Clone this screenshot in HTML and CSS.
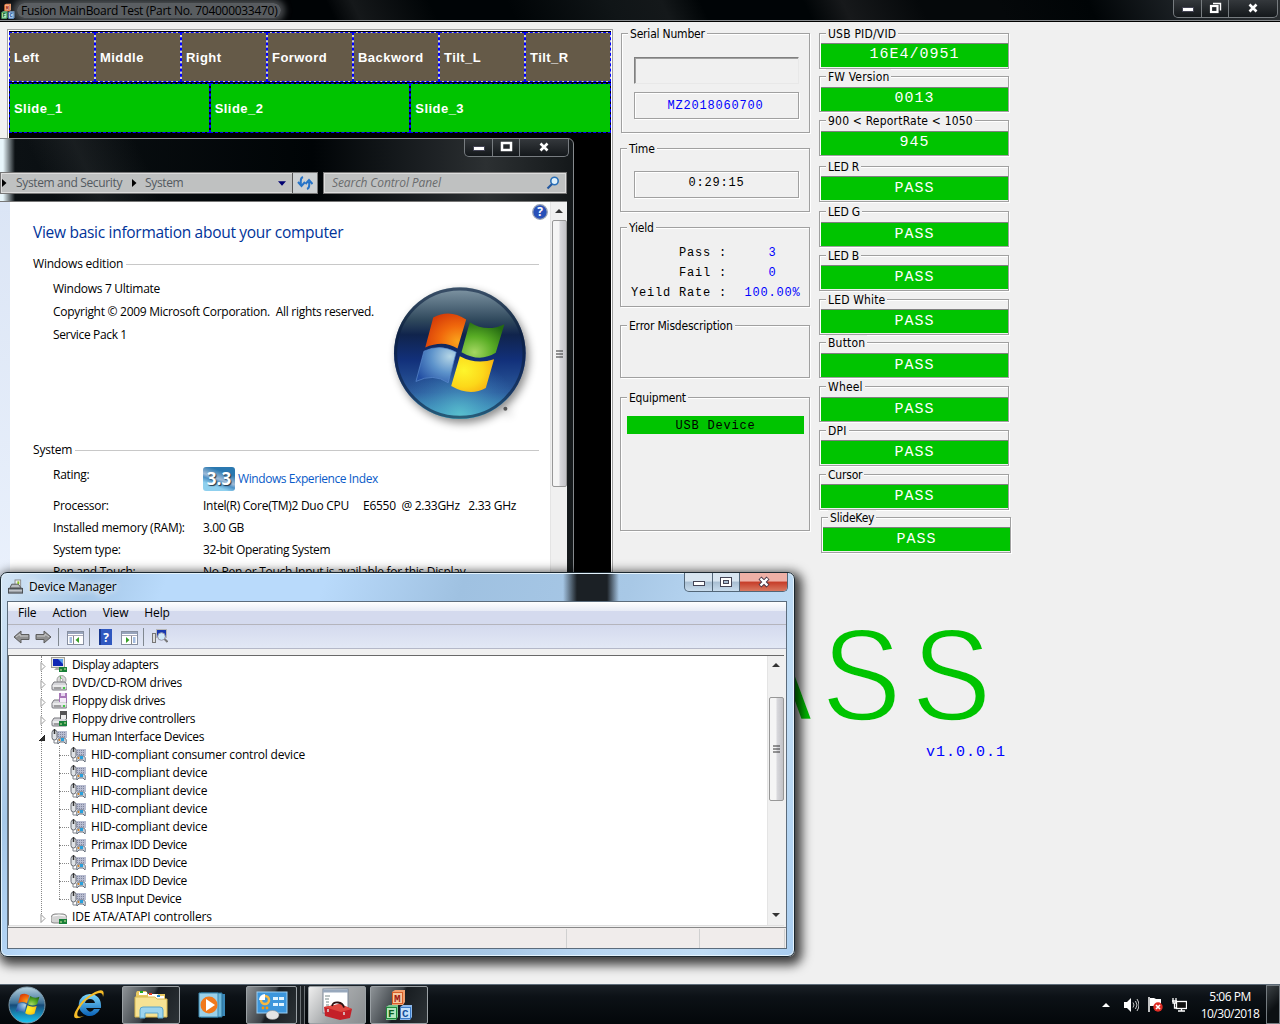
FILE: index.html
```html
<!DOCTYPE html>
<html lang="en">
<head>
<meta charset="utf-8">
<title>Fusion MainBoard Test</title>
<link rel="stylesheet" href="styles.css">
</head>
<body>
<svg class="defs" width="0" height="0">
  <defs>
    <radialGradient id="gRed" cx=".8" cy=".8" r=".9"><stop offset="0" stop-color="#fba51c"/><stop offset=".5" stop-color="#f0680c"/><stop offset="1" stop-color="#d43a08"/></radialGradient>
    <radialGradient id="gGreen" cx=".3" cy=".85" r=".9"><stop offset="0" stop-color="#a5d862"/><stop offset=".5" stop-color="#59ad25"/><stop offset="1" stop-color="#246a12"/></radialGradient>
    <radialGradient id="gBlue" cx=".85" cy=".25" r=".95"><stop offset="0" stop-color="#b5d6e6"/><stop offset=".5" stop-color="#5d93cb"/><stop offset="1" stop-color="#2450a4"/></radialGradient>
    <radialGradient id="gYellow" cx=".3" cy=".4" r=".9"><stop offset="0" stop-color="#fdf52c"/><stop offset=".5" stop-color="#fcd81a"/><stop offset="1" stop-color="#f59a0c"/></radialGradient>
    <linearGradient id="gOrb" x1="0" y1="0" x2="0" y2="1"><stop offset="0" stop-color="#8298a6"/><stop offset=".25" stop-color="#2f485c"/><stop offset=".36" stop-color="#10244c"/><stop offset=".55" stop-color="#12307a"/><stop offset=".8" stop-color="#2c5c9c"/><stop offset="1" stop-color="#48b4c8"/></linearGradient>
    <radialGradient id="gGlow" cx=".5" cy=".98" r=".45"><stop offset="0" stop-color="#5cc4d0" stop-opacity=".9"/><stop offset="1" stop-color="#3a78c0" stop-opacity="0"/></radialGradient>
    <linearGradient id="gStart" x1="0" y1="0" x2="0" y2="1"><stop offset="0" stop-color="#b9d3df"/><stop offset=".45" stop-color="#3a6f96"/><stop offset=".5" stop-color="#174a78"/><stop offset="1" stop-color="#19c8f4"/></linearGradient>
    <linearGradient id="gIe" x1="0" y1="0" x2="0" y2="1"><stop offset="0" stop-color="#7cd8fc"/><stop offset="1" stop-color="#0a62b8"/></linearGradient>
    <symbol id="flag" viewBox="100 125 280 250">
      <path fill="url(#gRed)" d="M160 142Q210 115 259 148L233 235Q190 208 136 232Z"/>
      <path fill="url(#gGreen)" d="M270 156Q320 188 374 162L348 248Q300 278 245 246Z"/>
      <path fill="url(#gBlue)" stroke="#5c8cd0" stroke-width="2" d="M132 243Q180 220 229 246L205 338Q160 308 108 334Z"/>
      <path fill="url(#gYellow)" d="M240 258Q290 285 343 267L318 354Q270 380 214 348Z"/>
    </symbol>
    <symbol id="mfc" viewBox="0 0 28 31">
      <path fill="#f0a070" d="M7 3l3-2h10v12l-2 3H7z"/><path fill="#d85e28" d="M7 3h11v12H7z"/><path fill="#f6c8a0" d="M8 4h9v10H8z"/>
      <path fill="#7cc890" d="M1 18l3-2h9v12l-2 3H1z"/><path fill="#1e8a3c" d="M1 18h11v12H1z"/><path fill="#b8e8c0" d="M2 19h9v10H2z"/>
      <path fill="#8cb8ec" d="M15 18l3-2h9v12l-2 3H15z"/><path fill="#3c7cc8" d="M15 18h11v12H15z"/><path fill="#c4e0fa" d="M16 19h9v10h-9z"/>
      <text class="cube" x="9" y="13" fill="#a01c14">M</text><text class="cube" x="3" y="28" fill="#0c5c20">F</text><text class="cube" x="17" y="28" fill="#14509c">C</text>
    </symbol>
    <symbol id="hid" viewBox="0 0 16 16">
      <rect x="6" y="2" width="10" height="7" fill="#b8bcd0"/><path d="M7 3.500h8M7 5.500h8M7 7.500h8" stroke="#8088a0" stroke-dasharray="1 1"/>
      <rect x="1" y="1" width="5" height="10" rx="2.500" fill="#dfe2e6" stroke="#686c74"/><path d="M3.500 0v5" stroke="#333" stroke-width="1.500"/>
      <path d="M7 15c-1-4 0-6 2-6h4c2 0 3 2 2 6l-2-2H9z" fill="#c8d0d8" stroke="#68707c"/><path d="M10 9h3v3h-3z" fill="#28a0dc"/><circle cx="8.500" cy="11" r="1" fill="#d88020"/><path d="M3 11v3h4" fill="none" stroke="#7c8088"/>
    </symbol>
    <symbol id="drive" viewBox="0 0 16 16"><path d="M1 10l2-3h11l2 3v4q0 1-1 1H2q-1 0-1-1z" fill="#d6d6da" stroke="#77777d"/><path d="M1.500 11h14" stroke="#fff"/><path d="M3 13h7" stroke="#666"/><rect x="12" y="12" width="2" height="2" fill="#4c4"/></symbol>
    <symbol id="display" viewBox="0 0 16 16"><rect x=".5" y=".5" width="13" height="10" fill="#e8e8e0" stroke="#a0a098"/><rect x="2" y="2" width="10" height="7" fill="#1028b4"/><path d="M7 2h5v5z" fill="#58a0f0"/><path d="M5 11h4v2H3z" fill="#b0b0a8"/><rect x="8" y="10" width="8" height="5" fill="#188038"/><path d="M9 13h2M13 12h2" stroke="#d8e8a0"/></symbol>
    <symbol id="disc" viewBox="0 0 16 16"><circle cx="10.500" cy="5" r="4.500" fill="#dcdcdc" stroke="#a0a0a0"/><circle cx="10.500" cy="5" r="1.400" fill="#fff" stroke="#aaa"/><path d="M9 1l1 3" stroke="#4ab84a"/><use href="#drive"/></symbol>
    <symbol id="floppy" viewBox="0 0 16 16"><use href="#drive"/><rect x="8" y="0" width="8" height="9" fill="#a878b8"/><rect x="10" y="0" width="4" height="3" fill="#e8d8f0"/><rect x="9" y="5" width="6" height="4" fill="#f4ecf8"/></symbol>
    <symbol id="floppyc" viewBox="0 0 16 16"><use href="#drive"/><rect x="9" y="0" width="7" height="8" fill="#555"/><rect x="10" y="4" width="5" height="4" fill="#eee"/><rect x="8" y="10" width="8" height="5" fill="#188038"/><path d="M9 13h2M13 12h2" stroke="#d8e8a0"/></symbol>
    <symbol id="ide" viewBox="0 0 16 16"><path d="M0 8q1-3 4-3h8q3 0 4 3v4q-1 2-4 2H3q-3 0-3-2z" fill="#d4d4d4" stroke="#888"/><path d="M2 7q6-2 12 0" stroke="#fff" fill="none"/><rect x="8" y="10" width="8" height="5" fill="#188038"/><path d="M9 13h2M13 12h2" stroke="#d8e8a0"/></symbol>
    <symbol id="arrow" viewBox="0 0 17 14"><path d="M1 7l7-6v3.500h8v5H8V13z" fill="#909090" stroke="#5c5c5c"/><path d="M3 7l4-3v2h8" fill="none" stroke="#c8c8c8"/></symbol>
    <symbol id="pane" viewBox="0 0 17 14"><rect x=".5" y=".5" width="16" height="13" fill="#fff" stroke="#8890a0"/><path d="M1 2h15" stroke="#98a4bc" stroke-width="2"/><path d="M1 4.500h15" stroke="#aab"/><path d="M6.500 5v8" stroke="#888"/><path d="M2.500 7h2.500M2.500 9h2.500M2.500 11h2.500" stroke="#4878c0"/><path d="M12 6v6L8.500 9z" fill="#38a028"/></symbol>
  </defs>
</svg>

<section class="app">
  <header class="app-title">
    <svg class="mfc-small"><use href="#mfc"/></svg>
    <span class="app-name">Fusion MainBoard Test (Part No. 704000033470)</span>
    <div class="caption dark">
      <i><svg viewBox="0 0 14 12"><rect x="1.500" y="5.500" width="11" height="4" fill="#fff" stroke="#445"/></svg></i>
      <i><svg viewBox="0 0 14 12"><path d="M5 1.500h7.500v7" fill="none" stroke="#fff" stroke-width="1.400"/><rect x="3" y="4" width="6.500" height="6" fill="none" stroke="#fff" stroke-width="2.200"/></svg></i>
      <i class="x"><svg viewBox="0 0 14 12"><path d="M3.500 2.500l7 7M10.500 2.500l-7 7" stroke="#fff" stroke-width="2.600"/></svg></i>
    </div>
  </header>
  <main class="app-body">
    <div class="keys">
      <div class="row top"><b>Left</b><b>Middle</b><b>Right</b><b>Forword</b><b>Backword</b><b>Tilt_L</b><b>Tilt_R</b></div>
      <div class="row slides"><b>Slide_1</b><b>Slide_2</b><b>Slide_3</b></div>
    </div>
    <div class="panel">
      <div class="columns">
        <div class="info">
          <fieldset class="serial"><legend>Serial Number</legend><div class="input"></div><div class="field blue">MZ2018060700</div></fieldset>
          <fieldset class="time"><legend>Time</legend><div class="field">0:29:15</div></fieldset>
          <fieldset class="yield"><legend>Yield</legend>
            <dl><dt>Pass :</dt><dd>3</dd><dt>Fail :</dt><dd>0</dd><dt>Yeild Rate :</dt><dd>100.00%</dd></dl></fieldset>
          <fieldset class="error"><legend>Error Misdescription</legend></fieldset>
          <fieldset class="equip"><legend>Equipment</legend><div class="usb">USB Device</div></fieldset>
        </div>
        <div class="tests">
          <fieldset class="value"><legend class="wide">USB PID/VID</legend><div>16E4/0951</div></fieldset>
          <fieldset class="value low"><legend class="mid">FW Version</legend><div>0013</div></fieldset>
          <fieldset class="value low"><legend class="wide">900 &lt; ReportRate &lt; 1050</legend><div>945</div></fieldset>
          <fieldset><legend>LED R</legend><div>PASS</div></fieldset>
          <fieldset class="low"><legend>LED G</legend><div>PASS</div></fieldset>
          <fieldset><legend>LED B</legend><div>PASS</div></fieldset>
          <fieldset><legend class="mid">LED White</legend><div>PASS</div></fieldset>
          <fieldset class="low"><legend class="wide">Button</legend><div>PASS</div></fieldset>
          <fieldset class="low"><legend class="wide">Wheel</legend><div>PASS</div></fieldset>
          <fieldset><legend class="wide">DPI</legend><div>PASS</div></fieldset>
          <fieldset><legend>Cursor</legend><div>PASS</div></fieldset>
          <fieldset class="shift"><legend>SlideKey</legend><div>PASS</div></fieldset>
        </div>
      </div>
      <div class="result">PASS</div>
      <div class="version">v1.0.0.1</div>
    </div>
  </main>
</section>

<section class="sys">
  <div class="sys-cap"><div class="caption dark">
    <i><svg viewBox="0 0 14 12"><rect x="1.500" y="5.500" width="11" height="4" fill="#fff" stroke="#445"/></svg></i>
    <i><svg viewBox="0 0 14 12"><rect x="3" y="2" width="9" height="7" fill="none" stroke="#fff" stroke-width="2.500"/></svg></i>
    <i class="x"><svg viewBox="0 0 14 12"><path d="M3.500 2.500l7 7M10.500 2.500l-7 7" stroke="#fff" stroke-width="2.600"/></svg></i>
  </div></div>
  <div class="nav">
    <div class="address">
      <svg class="tri" viewBox="0 0 5 8"><path d="M0 0l4.500 4L0 8z"/></svg><span class="crumb1">System and Security</span>
      <svg class="tri" viewBox="0 0 5 8"><path d="M0 0l4.500 4L0 8z"/></svg><span class="crumb2">System</span>
      <svg class="drop" viewBox="0 0 9 5"><path fill="#000070" d="M0 0h9L4.500 5z"/></svg>
      <span class="refresh"><svg viewBox="0 0 16 14"><path d="M6 1Q3 2 4 8M1 6l3.500 4L8 6M10 13q3-1 2-7M8.500 8L12 4l3.500 4" fill="none" stroke="#2674c8" stroke-width="2"/></svg></span>
    </div>
    <div class="search"><em>Search Control Panel</em><svg viewBox="0 0 14 14"><circle cx="8.500" cy="5" r="3.700" fill="#dff0fa" stroke="#2a70b8" stroke-width="1.600"/><path d="M6 8l-4.500 4.500" stroke="#2458a0" stroke-width="2.200"/></svg></div>
  </div>
  <div class="sys-client">
    <div class="side"></div>
    <div class="page">
      <div class="headrow"><h1>View basic information about your computer</h1>
        <svg class="help" viewBox="0 0 16 16"><circle cx="8" cy="8" r="7.300" fill="#2850b8" stroke="#9aa4b4" stroke-width="1.300"/><text x="8" y="12.300" text-anchor="middle" class="q">?</text></svg></div>
      <div class="sect"><span>Windows edition</span></div>
      <div class="edition">
        <div class="lines"><p class="l1">Windows 7 Ultimate</p><p class="l2">Copyright © 2009 Microsoft Corporation.&nbsp; All rights reserved.</p><p class="l3">Service Pack 1</p></div>
        <svg class="logo" viewBox="39 47 406 406">
          <circle cx="240" cy="249" r="198" fill="url(#gOrb)"/><circle cx="240" cy="249" r="198" fill="url(#gGlow)"/><circle cx="240" cy="249" r="193" fill="none" stroke="#0b2040" stroke-width="9" stroke-opacity=".6"/>
          <use href="#flag" x="100" y="125" width="280" height="250"/><circle cx="377" cy="416" r="6" fill="#555"/>
        </svg>
      </div>
      <div class="sect second"><span>System</span></div>
      <div class="specs">
        <span class="rating">Rating:</span><span class="index"><i class="score">3.3</i><a>Windows Experience Index</a></span>
        <span class="k1">Processor:</span><span class="cpu">Intel(R) Core(TM)2 Duo CPU&nbsp;&nbsp;&nbsp;&nbsp; E6550&nbsp; @ 2.33GHz&nbsp;&nbsp; 2.33 GHz</span>
        <span class="k2">Installed memory (RAM):</span><span class="v3">3.00 GB</span>
        <span class="k3">System type:</span><span class="v3">32-bit Operating System</span>
        <span class="k4">Pen and Touch:</span><span class="v4">No Pen or Touch Input is available for this Display</span>
      </div>
    </div>
    <div class="scroll"><svg class="up" viewBox="0 0 8 4"><path d="M0 4l4-4 4 4z"/></svg><div class="thumb"><svg viewBox="0 0 7 8"><path d="M0 1h7M0 4h7M0 7h7" stroke="#333"/></svg></div></div>
  </div>
</section>

<section class="dm">
  <div class="dm-title">
    <svg viewBox="0 0 16 16"><rect x="7.500" y=".5" width="6" height="8" fill="#eee" stroke="#888"/><rect x="10" y="2" width="2" height="3" fill="#8ac820"/><path d="M2 9l2-4h7l3 4z" fill="#b8bcc0" stroke="#555"/><rect x=".5" y="9.500" width="15" height="5" fill="#8c9298" stroke="#44484c"/><path d="M1 12h14" stroke="#d8dce0"/></svg>
    <span class="dm-name">Device Manager</span>
    <div class="caption light">
      <i><svg viewBox="0 0 14 12"><rect x="1.500" y="5.500" width="11" height="4" fill="#fff" stroke="#445"/></svg></i>
      <i><svg viewBox="0 0 14 12"><rect x="1.500" y="1.500" width="11" height="9" fill="#fff" stroke="#445"/><rect x="4.500" y="4.500" width="5" height="3" fill="#a8bcd0" stroke="#445"/></svg></i>
      <i class="x"><svg viewBox="0 0 14 12"><path d="M3 2l8 8M11 2l-8 8" stroke="#434" stroke-width="4.200"/><path d="M3.500 2.500l7 7M10.500 2.500l-7 7" stroke="#fff" stroke-width="2.400"/></svg></i>
    </div>
  </div>
  <div class="dm-client">
    <nav class="menu"><span>File</span><span>Action</span><span>View</span><span>Help</span></nav>
    <div class="tools">
      <svg class="a1"><use href="#arrow"/></svg><svg class="a2"><use href="#arrow"/></svg><u></u>
      <svg class="p1"><use href="#pane"/></svg><u></u>
      <svg class="h1" viewBox="0 0 13 16"><rect width="13" height="16" fill="#3058c0"/><path d="M1 0v16" stroke="#183890" stroke-width="2"/><text x="7" y="12.500" text-anchor="middle" class="q">?</text></svg>
      <svg class="p2"><use href="#pane"/></svg><u></u>
      <svg class="s1" viewBox="0 0 16 15"><rect x="4.500" y=".5" width="10" height="8" fill="#1838b0" stroke="#b8b8b8"/><rect x=".5" y="4.500" width="3" height="9" fill="#ddd" stroke="#777"/><circle cx="9.500" cy="7.500" r="3.800" fill="#cfe8f8" stroke="#99a"/><path d="M12.500 10l3 3" stroke="#777" stroke-width="2"/></svg>
    </div>
    <div class="treebox">
      <div class="tree">
        <div class="n"><svg class="exp" viewBox="0 0 5 9"><path d="M.5 .5v8L4.500 4.500z"/></svg><svg class="ic"><use href="#display"/></svg><span class="t1">Display adapters</span></div>
        <div class="n"><svg class="exp" viewBox="0 0 5 9"><path d="M.5 .5v8L4.500 4.500z"/></svg><svg class="ic"><use href="#disc"/></svg><span>DVD/CD-ROM drives</span></div>
        <div class="n"><svg class="exp" viewBox="0 0 5 9"><path d="M.5 .5v8L4.500 4.500z"/></svg><svg class="ic"><use href="#floppy"/></svg><span class="t3">Floppy disk drives</span></div>
        <div class="n"><svg class="exp" viewBox="0 0 5 9"><path d="M.5 .5v8L4.500 4.500z"/></svg><svg class="ic"><use href="#floppyc"/></svg><span class="t3">Floppy drive controllers</span></div>
        <div class="n"><svg class="exp open" viewBox="0 0 6 6"><path d="M6 0v6H0z"/></svg><svg class="ic"><use href="#hid"/></svg><span class="t3">Human Interface Devices</span></div>
        <div class="kids">
          <div class="n"><svg class="ic"><use href="#hid"/></svg><span>HID-compliant consumer control device</span></div>
          <div class="n"><svg class="ic"><use href="#hid"/></svg><span class="t7">HID-compliant device</span></div>
          <div class="n"><svg class="ic"><use href="#hid"/></svg><span class="t7">HID-compliant device</span></div>
          <div class="n"><svg class="ic"><use href="#hid"/></svg><span class="t7">HID-compliant device</span></div>
          <div class="n"><svg class="ic"><use href="#hid"/></svg><span class="t7">HID-compliant device</span></div>
          <div class="n"><svg class="ic"><use href="#hid"/></svg><span class="t1">Primax IDD Device</span></div>
          <div class="n"><svg class="ic"><use href="#hid"/></svg><span class="t1">Primax IDD Device</span></div>
          <div class="n"><svg class="ic"><use href="#hid"/></svg><span class="t1">Primax IDD Device</span></div>
          <div class="n"><svg class="ic"><use href="#hid"/></svg><span class="t3">USB Input Device</span></div>
        </div>
        <div class="n"><svg class="exp" viewBox="0 0 5 9"><path d="M.5 .5v8L4.500 4.500z"/></svg><svg class="ic"><use href="#ide"/></svg><span class="t7">IDE ATA/ATAPI controllers</span></div>
      </div>
      <div class="scroll dms"><svg class="up" viewBox="0 0 8 4"><path d="M0 4l4-4 4 4z"/></svg><div class="thumb"><svg viewBox="0 0 7 8"><path d="M0 1h7M0 4h7M0 7h7" stroke="#333"/></svg></div><svg class="down" viewBox="0 0 8 4"><path d="M0 0l4 4 4-4z"/></svg></div>
    </div>
    <div class="status"><i></i><i></i><i></i></div>
  </div>
</section>

<footer class="taskbar">
  <svg class="start" viewBox="0 0 38 38"><circle cx="19" cy="19" r="18" fill="url(#gStart)" stroke="#7d98a8"/><use href="#flag" x="7" y="7" width="25" height="23"/></svg>
  <svg class="ie" viewBox="0 0 34 34"><path d="M18 6a11 11 0 1 0 10 15h-6q-4 6-8-1h15Q30 7 18 6zM13 15q1-4 5-4t5 4z" fill="url(#gIe)"/><path d="M31 9Q34-1 23 4Q9 11 3 24Q-1 34 12 28Q3 31 6 23Q12 11 24 6Q31 3 31 9" fill="#f6bc28"/></svg>
  <span class="tb explorer"><svg viewBox="0 0 34 30"><path d="M2 3l1-2h9l2 3h17v22H2z" fill="#e8c860"/><path d="M5 2h8v3H5zM14 4h10v4H14zM22 6h8v3h-8z" fill="#fff"/><path d="M6 1h3v2H6z" fill="#2a2"/><path d="M15 3h3v2h-3z" fill="#e83820"/><path d="M23 5h3v2h-3z" fill="#28c"/><path d="M1 7h20l2 2h10v18H1z" fill="#f6e294" stroke="#d8b850"/><path d="M6 28v-8q0-3 3-3h17q3 0 3 3v8h-5v-5H11v5z" fill="#9cd4ee" stroke="#58a4cc"/></svg></span>
  <svg class="wmp" viewBox="0 0 28 26"><path d="M5 2h22v22H5z" fill="#3a88b8"/><path d="M3 1h21v24H3z" fill="#6cb8dc" stroke="#2a7098"/><path d="M1 1h19v24H1z" fill="#9cd0e8" stroke="#3a88b0"/><circle cx="11" cy="13" r="8.500" fill="#f0791c"/><path d="M8 7l9 6-9 6z" fill="#fff"/></svg>
  <span class="tb cpanel"><svg viewBox="0 0 34 30"><rect x="2" y="2" width="30" height="21" fill="#3c96dc" stroke="#9cd0f4"/><circle cx="10" cy="10" r="4" fill="none" stroke="#f8b840" stroke-width="2.500"/><path d="M10 10V4a6 6 0 0 0-6 6z" fill="#fff"/><rect x="18" y="7" width="5" height="3" fill="#e0f4ff"/><rect x="24" y="7" width="5" height="3" fill="#e0f4ff"/><rect x="18" y="13" width="5" height="3" fill="#e0f4ff"/><rect x="24" y="13" width="5" height="3" fill="#e0f4ff"/><circle cx="8" cy="18" r="1.400" fill="#f90"/><circle cx="12" cy="18" r="1.400" fill="#f90"/><ellipse cx="17.500" cy="25" rx="6.500" ry="4.500" fill="#e4e4e4" stroke="#888" stroke-width=".5"/></svg></span><span class="edge"></span><span class="edge"></span>
  <span class="tb active"><svg viewBox="0 0 34 34"><rect x="3" y="1" width="25" height="24" fill="#fff" stroke="#788494"/><path d="M3 3h25" stroke="#98a8bc" stroke-width="3"/><path d="M5 8h5M5 11h4M6 14h3M6 17h3" stroke="#788"/><path d="M4 19l16-3 12 5-2 9-10 2L5 28z" fill="#c42028"/><path d="M4 19l16-3 12 5-11 3z" fill="#e04840"/><path d="M12 18q1-4 6-3.500t6 5" fill="none" stroke="#301010" stroke-width="1.800"/><path d="M8 21v3M24 24v3" stroke="#ddd" stroke-width="1.500"/></svg></span>
  <span class="tb mfcb"><svg viewBox="0 0 28 31"><use href="#mfc" width="28" height="31"/></svg></span>
  <div class="tray">
    <svg class="tu" viewBox="0 0 8 4"><path d="M0 4l4-4 4 4z" fill="#fff"/></svg>
    <svg class="vol" viewBox="0 0 15 14"><path d="M0 4h3l4-4v14L3 10H0z" fill="#fff"/><path d="M9 4.500q2 2.500 0 5M11.500 3q3 4 0 8M13 1q4 6 0 12" fill="none" stroke="#ccc"/></svg>
    <svg class="flg" viewBox="0 0 15 15"><path d="M1 0v15" stroke="#fff" stroke-width="1.500"/><path d="M2 1h4l2 1h5v8H8L6 9H2z" fill="#fff"/><circle cx="10" cy="10" r="4.700" fill="#e02c24"/><path d="M8 8l4 4M12 8l-4 4" stroke="#fff" stroke-width="1.600"/></svg>
    <svg class="net" viewBox="0 0 15 14"><rect x="4.500" y="3.500" width="10" height="7" fill="#111" stroke="#fff" stroke-width="1.300"/><path d="M6 13h7M9.500 11v2M0 3h5M1 0v5h3V0M2.500 5v5H5" fill="none" stroke="#fff" stroke-width="1.300"/></svg>
    <div class="clock"><span>5:06 PM</span><span>10/30/2018</span></div>
    <div class="peek"></div>
  </div>
</footer>
</body>
</html>
```
FILE: styles.css
```css
* { box-sizing: border-box; }
body { margin: 0; width: 1280px; height: 1024px; overflow: hidden; position: relative; background: #f0f0f0; color: #000; font: 12px/16px "Open Sans", "Noto Sans", sans-serif; letter-spacing: -0.2px; }
svg { display: block; flex: none; }
span, p, a, legend, em { white-space: nowrap; }
.defs { position: absolute; }
.cube { font: bold 11px "Liberation Mono", monospace; letter-spacing: 0; }
.q { font: bold 12px "Open Sans", sans-serif; fill: #fff; letter-spacing: 0; }

/* test application */
.app { height: 984px; display: flex; flex-direction: column; }
.app-title { height: 22px; flex: none; display: flex; align-items: flex-start; background: linear-gradient(65deg, #0d1114 0 8%, #000305 20% 26%, #15181a 28%, #000406 34% 40%, #101517 48%, #14181a 52%, #000406 55% 63%, #17191b 66%, #05080a 72% 78%, #000406 85%, #1c2125 92%, #2c3033); border-bottom: 1px solid #000; box-shadow: inset 0 -1px #8a8d90; overflow: hidden; padding-left: 1px; }
.mfc-small { width: 14px; height: 16px; margin-top: 3px; }
.app-name { margin: 3px 0 0 2px; padding: 0 4px; height: 15px; line-height: 15px; border-radius: 8px; background: rgba(118,122,125,.75); box-shadow: 0 0 6px 4px rgba(118,122,125,.6); letter-spacing: -.29px; }
.caption { display: flex; margin-left: auto; height: 19px; border: 1px solid #777c80; border-top: 0; border-radius: 0 0 5px 5px; }
.caption i { width: 27px; display: flex; align-items: center; justify-content: center; border-right: 1px solid #777c80; }
.caption i:first-child { width: 28px; }
.caption i.x { flex: 1; border: 0; }
.caption svg { width: 14px; height: 12px; }
.dark { width: 105px; background: linear-gradient(#34383c, #14181b); }
.app-title .dark { margin-right: 2px; height: 18px; width: 105px; }
.app-title .dark svg { margin-top: -2px; }
.app-body { flex: 1; display: flex; align-items: flex-start; padding: 4px 0 0 7px; }
.keys { width: 606px; height: 900px; margin-top: 3px; background: #000; border: 1px solid #a0a0a0; border-width: 1px 1px 0; box-shadow: inset 1px 1px #fff, inset -1px 0 #fff; padding: 2px 1px 0; display: flex; flex-direction: column; }
.row { display: flex; }
.row b { flex: 1; border: 1px solid; display: flex; align-items: center; padding-left: 4px; color: #fff; font: bold 13px "Liberation Sans", sans-serif; letter-spacing: .45px; outline: 1px dashed #00f; outline-offset: -1px; }
.top { height: 50px; margin-bottom: 1px; }
.slides { height: 50px; }
.top b { background: #655a48; border-color: #d0d0d0; }
.slides b { background: #00c400; border-color: #000; }
.panel { width: 400px; margin-left: 7px; }
.columns { display: flex; gap: 9px; }
fieldset { margin: 0; padding: 0; min-width: 0; border: 1px solid #a0a0a0; box-shadow: 1px 1px #fff, inset 1px 1px #fff; }
legend { margin-left: 6px; padding: 0 2px; height: 14px; background: #f0f0f0; font: 12px/16px "DejaVu Sans Condensed", "DejaVu Sans", sans-serif; letter-spacing: -.2px; }
legend.wide { letter-spacing: .2px; }
legend.mid { letter-spacing: .15px; }
.info { width: 190px; display: grid; grid-template-rows: 115px 79px 98px 72px 141px; font: 12px/14px "Liberation Mono", monospace; letter-spacing: .8px; }
.serial { height: 107px; margin-left: 1px; }
.time { height: 71px; }
.yield { height: 87px; }
.error { height: 60px; }
.equip { height: 141px; }
.input { height: 27px; margin: 17px 10px 8px 12px; border: 1px solid; border-color: #808080 #e8e8e8 #e8e8e8 #808080; box-shadow: inset 1px 1px #a0a0a0; }
.field { height: 27px; margin: 0 10px 0 12px; border: 1px solid #a0a0a0; box-shadow: inset 1px 1px #fff, 1px 1px #fff; text-align: center; line-height: 25px; }
.serial .field { line-height: 26px; padding-right: 2px; }
.time .field { margin: 16px 10px 0 13px; line-height: 23px; }
.blue { color: #00f; }
dl { margin: 12px 9px 0 0; display: grid; grid-template-columns: 106px 73px; grid-template-rows: 20px 20px 20px; }
dt { text-align: right; }
dd { margin: 0 0 0 17px; width: 57px; color: #00f; text-align: center; white-space: nowrap; }
.usb { margin: 12px 5px 0 6px; height: 18px; line-height: 20px; background: #00c400; text-align: center; }
.tests { width: 192px; display: grid; grid-template-rows: 43px 44px 46px 45px 44px 44px 43px 44px 44px 44px 43px 42px; }
.tests fieldset { width: 190px; height: 43px; }
.tests fieldset.shift { margin-left: 2px; }
.tests div { margin: 3px 0 0 1px; height: 24px; border-top: 1px solid #808080; background: #00c400; color: #fff; text-align: center; font: 15px/23px "Liberation Mono", monospace; letter-spacing: 1px; }
.tests .value div { line-height: 21px; }
.tests .low div { margin-top: 4px; }
.result { margin: 73px 0 0 21px; height: 120px; font: 137px/120px "Liberation Mono", monospace; letter-spacing: 7.800px; color: #00c400; -webkit-text-stroke: 3.500px #f0f0f0; }
.version { width: 386px; margin-top: -2px; text-align: right; color: #00f; font: 15px/20px "Liberation Mono", monospace; letter-spacing: 1px; }

/* system properties window */
.sys { position: absolute; left: -6px; top: 138px; width: 580px; height: 440px; overflow: hidden; border: 1px solid #868a8d; border-radius: 0 6px 0 0; background: linear-gradient(65deg, transparent 30%, rgba(60,64,66,.3) 36%, transparent 44%), linear-gradient(90deg, #e8f6fb 0 8px, #0c1114 20px, #000406 55%, #1c2023 75%, #2c3032 85%, #14181a); display: flex; flex-direction: column; padding: 0 6px 0 5px; }
.sys-cap { height: 33px; display: flex; }
.sys-cap .dark { margin-right: -2px; height: 18px; }
.sys-cap .dark svg { margin-top: -1px; }
.nav { height: 22px; display: flex; gap: 6px; color: #535960; }
.address { width: 318px; border: 1px solid #777; box-shadow: inset 0 0 0 1px #ddd; background: #bfc1c1; display: flex; align-items: center; padding-left: 1px; margin-right: -1px; }
.tri { width: 5px; height: 8px; }
.crumb1 { margin: 0 9px 0 9px; width: 107px; letter-spacing: -.35px; }
.crumb2 { margin-left: 8px; flex: 1; letter-spacing: -.35px; }
.drop { width: 8px; height: 5px; margin-right: 6px; }
.refresh { width: 25px; height: 20px; border-left: 1px solid #555; display: flex; align-items: center; justify-content: center; background: #ccd0d2; }
.refresh svg { width: 16px; height: 14px; }
.search { flex: 1; border: 1px solid #777; box-shadow: inset 0 0 0 1px #ddd; background: #bfc1c1; display: flex; align-items: center; justify-content: space-between; padding: 0 6px 0 8px; color: #6a6c6e; letter-spacing: -.1px; }
.search svg { width: 14px; height: 14px; }
.sys-client { margin-top: 7px; height: 400px; flex: none; border-top: 1px solid #777; display: flex; background: #fff; margin-bottom: -50px; }
.side { width: 10px; background: linear-gradient(#dbe5f5, #eaf1fc); }
.page { flex: 1; padding: 0 11px 0 23px; }
.headrow { display: flex; justify-content: space-between; }
h1 { margin: 19px 0 1px; font: 15.500px/22px "Open Sans", sans-serif; color: #003399; letter-spacing: -.29px; white-space: nowrap; }
.help { width: 16px; height: 16px; margin: 2px -9px 0 0; }
.sect { display: flex; align-items: center; gap: 3px; margin-top: 12px; height: 16px; }
.sect::after { content: ""; flex: 1; height: 1px; background: #c8c8c8; }
.edition { display: flex; justify-content: space-between; padding: 9px 11px 0 20px; height: 164px; }
.edition p { margin: 0 0 7px; letter-spacing: -.28px; }
.edition .l3 { letter-spacing: -.35px; }
.logo { width: 135px; height: 135px; margin: 5px 0 0 -40px; filter: drop-shadow(3px 4px 4px rgba(0,0,0,.45)); }
.sect.second { margin-top: 6px; }
.specs { padding: 9px 0 0 20px; display: grid; grid-template-columns: 150px 1fr; grid-template-rows: 31px 22px 22px 22px 22px; letter-spacing: -.28px; }
.k2 { letter-spacing: -.22px; }
.v3 { letter-spacing: -.34px; }
.index { display: flex; gap: 3px; align-items: center; height: 24px; color: #0a5bc8; letter-spacing: -.42px; }
.score { width: 32px; height: 24px; border-radius: 3px; background: linear-gradient(20deg, #8fd0ee 25%, #4e92c6 40%, #a0bcd8 50%, #2a78b0 75%); color: #fff; font: bold 17px/24px "Open Sans", sans-serif; text-align: center; text-shadow: 1px 1px 1px #234; letter-spacing: 0; }
.scroll { width: 17px; background: #f0f0f0; display: flex; flex-direction: column; align-items: center; border-left: 1px solid #e4e4e4; }
.up, .down { width: 8px; height: 4px; fill: #333; }
.up { margin-top: 7px; }
.down { margin: auto 0 8px; }
.thumb { margin-top: 7px; width: 15px; height: 267px; border: 1px solid #979797; border-radius: 2px; background: linear-gradient(90deg, #f5f5f5 45%, #d8d8dc 55%, #c2c2c6); display: flex; align-items: center; justify-content: center; flex: none; }
.thumb svg { width: 7px; height: 8px; }

/* device manager */
.dm { position: absolute; left: 0; top: 572px; width: 795px; height: 385px; border: 1px solid #1c2830; border-radius: 7px; background: linear-gradient(90deg, transparent 562px, #1b2025 576px 606px, transparent 618px) 0 0 / 100% 29px no-repeat, linear-gradient(110deg, #d5e6f6 0, #a6c8e8 10%, #b9dafb 18%, #b9dafb 35%, #9fc1e1 50%, #a8c8e6 68%, #b8d6f2 78%, #c0dcf4 90%, #a9cdf0); box-shadow: inset 0 0 0 1px #e4f3fd, 3px 4px 11px 4px rgba(0,0,0,.75); padding: 0 7px 7px 6px; display: flex; flex-direction: column; }
.dm-title { height: 28px; flex: none; display: flex; align-items: flex-start; gap: 6px; }
.dm-title > svg { width: 15px; height: 16px; margin: 6px 0 0 1px; }
.dm-name { margin-top: 6px; text-shadow: 0 0 6px #fff, 0 0 8px #fff; letter-spacing: -.15px; }
.light { width: 104px; margin-right: -1px; background: linear-gradient(#d8e5f0 45%, #a8bed2 50%, #c8dced); border-color: #526678; overflow: hidden; }
.light i { border-color: #526678; }
.light i.x { background: linear-gradient(#eeb0a6 45%, #c63c28 50%, #d87860); }
.dm-client { flex: 1; border: 1px solid #5c6c7c; background: #f0f0f0; display: flex; flex-direction: column; min-height: 0; }
.menu { height: 23px; flex: none; display: flex; gap: 16px; padding: 3px 0 0 10px; background: linear-gradient(#fff, #e8ecf6 40%, #d4daee 42%); border-bottom: 1px solid #b4b4bc; letter-spacing: -.15px; }
.tools { height: 24px; flex: none; display: flex; align-items: center; padding-left: 5px; background: linear-gradient(#d4daee, #e2e8f5); border-bottom: 1px solid #b4b8c8; }
.tools u { width: 1px; height: 18px; background: #808890; }
.a1, .a2 { width: 17px; height: 14px; }
.a2 { transform: scaleX(-1); margin: 0 6px 0 5px; }
.p1, .p2 { width: 17px; height: 14px; }
.p1 { margin: 2px 5px 0 8px; }
.h1 { width: 13px; height: 16px; margin-left: 9px; }
.p2 { transform: scaleX(-1); margin: 2px 5px 0 9px; }
.s1 { width: 16px; height: 15px; margin-left: 8px; }
.treebox { margin: 6px 2px 0 0; height: 271px; flex: none; border: 1px solid #696969; border-right: 0; border-bottom: 1px solid #e0e0e0; background: #fff; display: flex; overflow: hidden; }
.tree { flex: 1; margin-left: 32px; border-left: 1px dotted #888; height: 258px; }
.n { height: 18px; display: flex; align-items: center; }
.exp { width: 6px; height: 9px; margin: 2px 4px 0 -2px; fill: #fff; stroke: #999; background: #fff; }
.exp.open { height: 6px; fill: #333; stroke: #222; margin-left: -3px; margin-right: 5px; }
.ic { width: 16px; height: 16px; margin-right: 5px; }
.tree > .n .ic { margin-left: 1px; }
.t1 { letter-spacing: -.43px; }
.t3 { letter-spacing: -.35px; }
.t7 { letter-spacing: -.15px; }
.kids { margin-left: 17px; position: relative; }
.kids .n::before { content: ""; width: 10px; border-top: 1px dotted #888; }
.kids::before { content: ""; position: absolute; left: 0; top: 0; height: 153px; border-left: 1px dotted #888; }
.kids .ic { margin-left: 1px; }
.dms .thumb { height: 104px; margin-top: 30px; }
.status { flex: 1; margin-top: 1px; border-top: 1px solid #888; background: #f0eceb; display: flex; }
.status i { width: 133px; border-right: 1px solid #d0d0d0; margin-top: 1px; }
.status i:first-child { width: 559px; }
.status i:last-child { width: 85px; }

/* taskbar */
.taskbar { position: absolute; left: 0; top: 984px; width: 1280px; height: 40px; background: linear-gradient(#1a2026, #0c1116 30%, #03070a); border-top: 1px solid #5d6b78; display: flex; align-items: center; }
.start { width: 38px; height: 38px; margin-left: 8px; }
.ie { width: 34px; height: 34px; margin: 0 16px 0 26px; }
.tb { width: 58px; height: 38px; border: 1px solid #9aa0a4; border-radius: 2px; background: linear-gradient(115deg, #8e9397, #3c4247 45%, #181d21 50%, #2c3236); display: flex; align-items: center; justify-content: center; flex: none; }
.tb svg { width: 34px; height: 30px; }
.wmp { width: 28px; height: 26px; margin: 0 20px 0 18px; }
.cpanel { width: 51px; }
.edge { width: 4px; height: 38px; border-right: 1px solid #6a7074; background: #1c2125; }
.tb.active { margin-left: 3px; background: linear-gradient(125deg, #eee, #a5a8aa 50%, #888c8f); }
.tb.active svg { width: 34px; height: 34px; }
.mfcb { margin-left: 4px; }
.tb.mfcb svg { width: 28px; height: 31px; }
.tray { margin-left: auto; display: flex; align-items: center; height: 100%; color: #fff; }
.tu { width: 8px; height: 4px; }
.vol { width: 15px; height: 14px; margin-left: 14px; }
.flg { width: 15px; height: 15px; margin-left: 9px; }
.net { width: 15px; height: 14px; margin-left: 9px; }
.clock { display: flex; flex-direction: column; align-items: center; width: 79px; padding-left: 7px; line-height: 17px; letter-spacing: -.5px; }
.peek { width: 14px; height: 39px; border: 1px solid #747b80; background: linear-gradient(135deg, #3c4246, #0c1013 60%); }
```
